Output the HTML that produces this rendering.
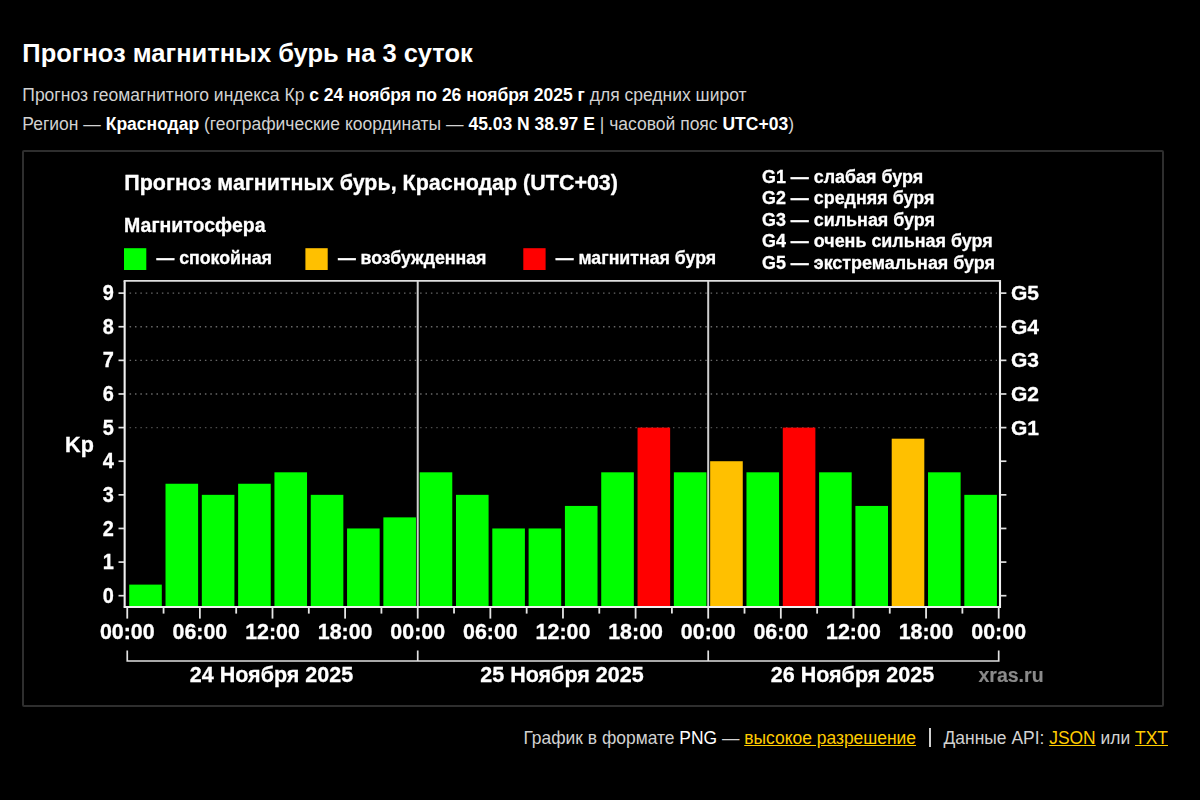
<!DOCTYPE html>
<html lang="ru"><head><meta charset="utf-8"><title>Прогноз магнитных бурь на 3 суток</title>
<style>
html,body{margin:0;padding:0;background:#000;}
body{width:1200px;height:800px;position:relative;overflow:hidden;font-family:"Liberation Sans",Arial,sans-serif;color:#d2d2d2;}
h1{position:absolute;left:22.3px;top:37.8px;margin:0;font-size:25.5px;line-height:30px;font-weight:bold;color:#fff;white-space:nowrap;}
p{position:absolute;left:22.3px;margin:0;font-size:17.5px;line-height:22px;white-space:nowrap;}
p b{color:#fff;}
#l1{top:84px;} #l2{top:112.5px;}
#box{position:absolute;left:22px;top:150px;width:1138.2px;height:552.8px;border:2px solid #2e2e2e;border-radius:2px;}
svg{position:absolute;left:0;top:0;filter:blur(0.35px);}
svg text{font-family:"Liberation Sans",Arial,sans-serif;font-weight:bold;fill:#fff;stroke:#fff;stroke-width:0.3px;}
.ax{font-size:21px;} .kp{font-size:21.6px;} .tm{font-size:21.4px;} .dt{font-size:21.5px;}
.xr{font-size:19.5px;fill:#8a8a8a !important;stroke:#8a8a8a !important;stroke-width:0.15px !important;} .ct{font-size:21.47px;} .ms{font-size:19.5px;} .lg{font-size:17.75px;} .lg2{font-size:17.92px;}
#ft{position:absolute;right:32px;top:726px;margin:0;font-size:17.45px;line-height:24px;white-space:nowrap;left:auto;}
#ft a{color:#ffcc00;text-decoration:underline;}
#ft .w{color:#fff;}
#ft .sep{display:inline-block;width:2px;height:19px;background:#d0d0d0;vertical-align:-3px;margin:0 12.5px 0 13px;}
</style></head><body>
<h1>Прогноз магнитных бурь на 3 суток</h1>
<p id="l1">Прогноз геомагнитного индекса Кр <b>с 24 ноября по 26 ноября 2025 г</b> для средних широт</p>
<p id="l2">Регион — <b>Краснодар</b> (географические координаты — <b>45.03 N 38.97 E</b> | часовой пояс <b>UTC+03</b>)</p>
<div id="box"></div>
<svg width="1200" height="800" viewBox="0 0 1200 800">
<line x1="129.6" x2="997" y1="427.60" y2="427.60" stroke="#4c4c4c" stroke-width="1.4" stroke-dasharray="1.5 3.88"/>
<line x1="129.6" x2="997" y1="393.98" y2="393.98" stroke="#686868" stroke-width="1.4" stroke-dasharray="1.5 3.88"/>
<line x1="129.6" x2="997" y1="360.36" y2="360.36" stroke="#686868" stroke-width="1.4" stroke-dasharray="1.5 3.88"/>
<line x1="129.6" x2="997" y1="326.74" y2="326.74" stroke="#686868" stroke-width="1.4" stroke-dasharray="1.5 3.88"/>
<line x1="129.6" x2="997" y1="293.12" y2="293.12" stroke="#686868" stroke-width="1.4" stroke-dasharray="1.5 3.88"/>
<rect x="129.20" y="584.61" width="32.6" height="21.89" fill="#00ff00"/>
<rect x="165.51" y="483.75" width="32.6" height="122.75" fill="#00ff00"/>
<rect x="201.82" y="494.84" width="32.6" height="111.66" fill="#00ff00"/>
<rect x="238.13" y="483.75" width="32.6" height="122.75" fill="#00ff00"/>
<rect x="274.44" y="472.31" width="32.6" height="134.19" fill="#00ff00"/>
<rect x="310.75" y="494.84" width="32.6" height="111.66" fill="#00ff00"/>
<rect x="347.06" y="528.46" width="32.6" height="78.04" fill="#00ff00"/>
<rect x="383.37" y="517.37" width="32.6" height="89.13" fill="#00ff00"/>
<rect x="419.68" y="472.31" width="32.6" height="134.19" fill="#00ff00"/>
<rect x="455.99" y="494.84" width="32.6" height="111.66" fill="#00ff00"/>
<rect x="492.30" y="528.46" width="32.6" height="78.04" fill="#00ff00"/>
<rect x="528.61" y="528.46" width="32.6" height="78.04" fill="#00ff00"/>
<rect x="564.92" y="505.93" width="32.6" height="100.57" fill="#00ff00"/>
<rect x="601.23" y="472.31" width="32.6" height="134.19" fill="#00ff00"/>
<rect x="637.54" y="427.60" width="32.6" height="178.90" fill="#ff0000"/>
<rect x="673.85" y="472.31" width="32.6" height="134.19" fill="#00ff00"/>
<rect x="710.16" y="461.22" width="32.6" height="145.28" fill="#ffc000"/>
<rect x="746.47" y="472.31" width="32.6" height="134.19" fill="#00ff00"/>
<rect x="782.78" y="427.60" width="32.6" height="178.90" fill="#ff0000"/>
<rect x="819.09" y="472.31" width="32.6" height="134.19" fill="#00ff00"/>
<rect x="855.40" y="505.93" width="32.6" height="100.57" fill="#00ff00"/>
<rect x="891.71" y="438.69" width="32.6" height="167.81" fill="#ffc000"/>
<rect x="928.02" y="472.31" width="32.6" height="134.19" fill="#00ff00"/>
<rect x="964.33" y="494.84" width="32.6" height="111.66" fill="#00ff00"/>
<line x1="417.73" x2="417.73" y1="281" y2="606" stroke="#cfcfcf" stroke-width="2"/>
<line x1="708.21" x2="708.21" y1="281" y2="606" stroke="#cfcfcf" stroke-width="2"/>
<path d="M124.65 607.8 V281 M1000 281 V607.8" fill="none" stroke="#f0f0f0" stroke-width="2.1"/>
<line x1="123.6" x2="1001.05" y1="280.95" y2="280.95" stroke="#dedede" stroke-width="1.8"/>
<line x1="123.8" x2="1001" y1="606.95" y2="606.95" stroke="#f0f0f0" stroke-width="1.9"/>
<line x1="118.5" x2="124" y1="595.70" y2="595.70" stroke="#e0e0e0" stroke-width="1.7"/>
<line x1="1000.5" x2="1006.4" y1="595.70" y2="595.70" stroke="#e0e0e0" stroke-width="1.7"/>
<text transform="translate(113.8 602.80) scale(0.95 1.08)" text-anchor="end" class="ax">0</text>
<line x1="118.5" x2="124" y1="562.08" y2="562.08" stroke="#e0e0e0" stroke-width="1.7"/>
<line x1="1000.5" x2="1006.4" y1="562.08" y2="562.08" stroke="#e0e0e0" stroke-width="1.7"/>
<text transform="translate(113.8 569.18) scale(0.95 1.08)" text-anchor="end" class="ax">1</text>
<line x1="118.5" x2="124" y1="528.46" y2="528.46" stroke="#e0e0e0" stroke-width="1.7"/>
<line x1="1000.5" x2="1006.4" y1="528.46" y2="528.46" stroke="#e0e0e0" stroke-width="1.7"/>
<text transform="translate(113.8 535.56) scale(0.95 1.08)" text-anchor="end" class="ax">2</text>
<line x1="118.5" x2="124" y1="494.84" y2="494.84" stroke="#e0e0e0" stroke-width="1.7"/>
<line x1="1000.5" x2="1006.4" y1="494.84" y2="494.84" stroke="#e0e0e0" stroke-width="1.7"/>
<text transform="translate(113.8 501.94) scale(0.95 1.08)" text-anchor="end" class="ax">3</text>
<line x1="118.5" x2="124" y1="461.22" y2="461.22" stroke="#e0e0e0" stroke-width="1.7"/>
<line x1="1000.5" x2="1006.4" y1="461.22" y2="461.22" stroke="#e0e0e0" stroke-width="1.7"/>
<text transform="translate(113.8 468.32) scale(0.95 1.08)" text-anchor="end" class="ax">4</text>
<line x1="118.5" x2="124" y1="427.60" y2="427.60" stroke="#e0e0e0" stroke-width="1.7"/>
<line x1="1000.5" x2="1006.4" y1="427.60" y2="427.60" stroke="#e0e0e0" stroke-width="1.7"/>
<text transform="translate(113.8 434.70) scale(0.95 1.08)" text-anchor="end" class="ax">5</text>
<line x1="118.5" x2="124" y1="393.98" y2="393.98" stroke="#e0e0e0" stroke-width="1.7"/>
<line x1="1000.5" x2="1006.4" y1="393.98" y2="393.98" stroke="#e0e0e0" stroke-width="1.7"/>
<text transform="translate(113.8 401.08) scale(0.95 1.08)" text-anchor="end" class="ax">6</text>
<line x1="118.5" x2="124" y1="360.36" y2="360.36" stroke="#e0e0e0" stroke-width="1.7"/>
<line x1="1000.5" x2="1006.4" y1="360.36" y2="360.36" stroke="#e0e0e0" stroke-width="1.7"/>
<text transform="translate(113.8 367.46) scale(0.95 1.08)" text-anchor="end" class="ax">7</text>
<line x1="118.5" x2="124" y1="326.74" y2="326.74" stroke="#e0e0e0" stroke-width="1.7"/>
<line x1="1000.5" x2="1006.4" y1="326.74" y2="326.74" stroke="#e0e0e0" stroke-width="1.7"/>
<text transform="translate(113.8 333.84) scale(0.95 1.08)" text-anchor="end" class="ax">8</text>
<line x1="118.5" x2="124" y1="293.12" y2="293.12" stroke="#e0e0e0" stroke-width="1.7"/>
<line x1="1000.5" x2="1006.4" y1="293.12" y2="293.12" stroke="#e0e0e0" stroke-width="1.7"/>
<text transform="translate(113.8 300.22) scale(0.95 1.08)" text-anchor="end" class="ax">9</text>
<text x="1011" y="434.60" class="ax">G1</text>
<text x="1011" y="400.98" class="ax">G2</text>
<text x="1011" y="367.36" class="ax">G3</text>
<text x="1011" y="333.74" class="ax">G4</text>
<text x="1011" y="300.12" class="ax">G5</text>
<text x="65.1" y="451.6" class="kp">Kp</text>
<line x1="127.25" x2="127.25" y1="607.5" y2="618.6" stroke="#e6e6e6" stroke-width="1.8"/>
<text x="127.25" y="639.3" text-anchor="middle" class="tm">00:00</text>
<line x1="163.56" x2="163.56" y1="607.5" y2="613.6" stroke="#e6e6e6" stroke-width="1.8"/>
<line x1="199.87" x2="199.87" y1="607.5" y2="618.6" stroke="#e6e6e6" stroke-width="1.8"/>
<text x="199.87" y="639.3" text-anchor="middle" class="tm">06:00</text>
<line x1="236.18" x2="236.18" y1="607.5" y2="613.6" stroke="#e6e6e6" stroke-width="1.8"/>
<line x1="272.49" x2="272.49" y1="607.5" y2="618.6" stroke="#e6e6e6" stroke-width="1.8"/>
<text x="272.49" y="639.3" text-anchor="middle" class="tm">12:00</text>
<line x1="308.80" x2="308.80" y1="607.5" y2="613.6" stroke="#e6e6e6" stroke-width="1.8"/>
<line x1="345.11" x2="345.11" y1="607.5" y2="618.6" stroke="#e6e6e6" stroke-width="1.8"/>
<text x="345.11" y="639.3" text-anchor="middle" class="tm">18:00</text>
<line x1="381.42" x2="381.42" y1="607.5" y2="613.6" stroke="#e6e6e6" stroke-width="1.8"/>
<line x1="417.73" x2="417.73" y1="607.5" y2="618.6" stroke="#e6e6e6" stroke-width="1.8"/>
<text x="417.73" y="639.3" text-anchor="middle" class="tm">00:00</text>
<line x1="454.04" x2="454.04" y1="607.5" y2="613.6" stroke="#e6e6e6" stroke-width="1.8"/>
<line x1="490.35" x2="490.35" y1="607.5" y2="618.6" stroke="#e6e6e6" stroke-width="1.8"/>
<text x="490.35" y="639.3" text-anchor="middle" class="tm">06:00</text>
<line x1="526.66" x2="526.66" y1="607.5" y2="613.6" stroke="#e6e6e6" stroke-width="1.8"/>
<line x1="562.97" x2="562.97" y1="607.5" y2="618.6" stroke="#e6e6e6" stroke-width="1.8"/>
<text x="562.97" y="639.3" text-anchor="middle" class="tm">12:00</text>
<line x1="599.28" x2="599.28" y1="607.5" y2="613.6" stroke="#e6e6e6" stroke-width="1.8"/>
<line x1="635.59" x2="635.59" y1="607.5" y2="618.6" stroke="#e6e6e6" stroke-width="1.8"/>
<text x="635.59" y="639.3" text-anchor="middle" class="tm">18:00</text>
<line x1="671.90" x2="671.90" y1="607.5" y2="613.6" stroke="#e6e6e6" stroke-width="1.8"/>
<line x1="708.21" x2="708.21" y1="607.5" y2="618.6" stroke="#e6e6e6" stroke-width="1.8"/>
<text x="708.21" y="639.3" text-anchor="middle" class="tm">00:00</text>
<line x1="744.52" x2="744.52" y1="607.5" y2="613.6" stroke="#e6e6e6" stroke-width="1.8"/>
<line x1="780.83" x2="780.83" y1="607.5" y2="618.6" stroke="#e6e6e6" stroke-width="1.8"/>
<text x="780.83" y="639.3" text-anchor="middle" class="tm">06:00</text>
<line x1="817.14" x2="817.14" y1="607.5" y2="613.6" stroke="#e6e6e6" stroke-width="1.8"/>
<line x1="853.45" x2="853.45" y1="607.5" y2="618.6" stroke="#e6e6e6" stroke-width="1.8"/>
<text x="853.45" y="639.3" text-anchor="middle" class="tm">12:00</text>
<line x1="889.76" x2="889.76" y1="607.5" y2="613.6" stroke="#e6e6e6" stroke-width="1.8"/>
<line x1="926.07" x2="926.07" y1="607.5" y2="618.6" stroke="#e6e6e6" stroke-width="1.8"/>
<text x="926.07" y="639.3" text-anchor="middle" class="tm">18:00</text>
<line x1="962.38" x2="962.38" y1="607.5" y2="613.6" stroke="#e6e6e6" stroke-width="1.8"/>
<line x1="998.69" x2="998.69" y1="607.5" y2="618.6" stroke="#e6e6e6" stroke-width="1.8"/>
<text x="998.69" y="639.3" text-anchor="middle" class="tm">00:00</text>
<path d="M127.25 650.5 V661 H998.69 V650.5 M417.73 650.5 V661 M708.21 650.5 V661" fill="none" stroke="#e0e0e0" stroke-width="1.7"/>
<text x="271.49" y="682" text-anchor="middle" class="dt">24 Ноября 2025</text>
<text x="561.97" y="682" text-anchor="middle" class="dt">25 Ноября 2025</text>
<text x="852.45" y="682" text-anchor="middle" class="dt">26 Ноября 2025</text>
<text x="978.5" y="682" class="xr">xras.ru</text>
<text x="124.3" y="190.2" class="ct">Прогноз магнитных бурь, Краснодар (UTC+03)</text>
<text x="124.1" y="231.7" class="ms">Магнитосфера</text>
<rect x="124" y="248.2" width="22.3" height="21.8" fill="#00ff00"/>
<text x="156.5" y="264.3" class="lg">— спокойная</text>
<rect x="305.4" y="248.2" width="22.3" height="21.8" fill="#ffc000"/>
<text x="337.9" y="264.3" class="lg">— возбужденная</text>
<rect x="523.3" y="248.2" width="22.3" height="21.8" fill="#ff0000"/>
<text x="555.8" y="264.3" class="lg">— магнитная буря</text>
<text x="762" y="183.00" class="lg2">G1 — слабая буря</text>
<text x="762" y="204.45" class="lg2">G2 — средняя буря</text>
<text x="762" y="225.90" class="lg2">G3 — сильная буря</text>
<text x="762" y="247.35" class="lg2">G4 — очень сильная буря</text>
<text x="762" y="268.80" class="lg2">G5 — экстремальная буря</text>
</svg>
<p id="ft">График в формате <span class="w">PNG</span> — <a>высокое разрешение</a><span class="sep"></span>Данные API: <a>JSON</a> или <a>TXT</a></p>
</body></html>
